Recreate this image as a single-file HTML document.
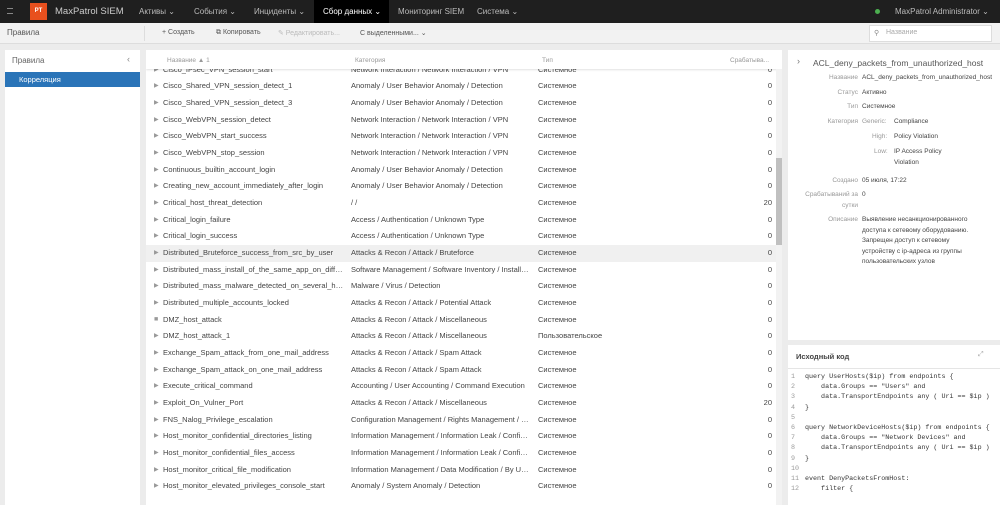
<!DOCTYPE html>
<html><head><meta charset="utf-8"><style>
*{margin:0;padding:0;box-sizing:border-box}
body{width:1000px;height:505px;overflow:hidden;background:#ececec;font-family:"Liberation Sans",sans-serif;font-size:7.5px;color:#333;position:relative}
.abs{position:absolute}
.nav{left:0;top:0;width:1000px;height:23px;background:#1f1f1f;color:#bbb;font-size:8px}
.nav span{position:absolute;top:7px}
.tb{left:0;top:23px;width:1000px;height:21px;background:#f2f2f2;border-bottom:1px solid #ddd;font-size:7px;color:#555}
.tb span{position:absolute;top:6px}
.panel{background:#fff}
.row{position:absolute;left:0;width:630px;height:16.67px;line-height:16.67px;white-space:nowrap;color:#444}
.row span{position:absolute;overflow:hidden;text-overflow:ellipsis}
.c1{left:17px;width:183px}
.c2{left:205px;width:180px}
.c3{left:392px}
.c4{right:4px}
.tri{position:absolute;left:8px;color:#999;font-size:6px}
.lbl{position:absolute;color:#999;text-align:right;width:70px;left:0}
.val{position:absolute;left:74px;color:#444}
.code{font-family:"Liberation Mono",monospace;font-size:6.7px;color:#333;white-space:pre}
</style></head><body>
<div class="abs nav">
<div class="abs" style="left:7px;top:8px;width:6px;height:6px;border-top:1px solid #888;border-bottom:1px solid #888"></div>
<div class="abs" style="left:30px;top:3px;width:17px;height:17px;background:#e8501e;color:#fff;font-size:6px;font-weight:bold;text-align:center;line-height:17px">PT</div>
<span style="left:55px;top:6px;font-size:9.5px;color:#ccc">MaxPatrol SIEM</span>
<span style="left:139px">Активы ⌄</span>
<span style="left:194px">События ⌄</span>
<span style="left:254px">Инциденты ⌄</span>
<div class="abs" style="left:314px;top:0;width:75px;height:23px;background:#000"></div>
<span style="left:323px;color:#fff">Сбор данных ⌄</span>
<span style="left:398px">Мониторинг SIEM</span>
<span style="left:477px">Система ⌄</span>
<div class="abs" style="left:875px;top:9px;width:5px;height:5px;border-radius:50%;background:#4caf50"></div>
<span style="left:895px">MaxPatrol Administrator ⌄</span>
</div>
<div class="abs tb">
<span style="left:7px;font-size:8px;top:5px">Правила</span>
<div class="abs" style="left:144px;top:3px;width:1px;height:15px;background:#ddd"></div>
<span style="left:162px">+ Создать</span>
<span style="left:216px">⧉ Копировать</span>
<span style="left:278px;color:#bbb">✎ Редактировать...</span>
<span style="left:360px">С выделенными... ⌄</span>
<div class="abs" style="left:869px;top:2px;width:123px;height:17px;background:#fff;border:1px solid #ddd"></div>
<span style="left:874px;color:#888">⚲</span>
<span style="left:886px;color:#aaa">Название</span>
</div>
<div class="abs panel" style="left:5px;top:50px;width:135px;height:455px">
<div class="abs" style="left:7px;top:6px;font-size:8px;color:#666">Правила</div>
<div class="abs" style="left:122px;top:4px;font-size:9px;color:#888">‹</div>
<div class="abs" style="left:0;top:22px;width:135px;height:15px;background:#2a74b8;color:#fff;padding:3px 0 0 14px">Корреляция</div>
</div>
<div class="abs panel" style="left:146px;top:50px;width:636px;height:455px;overflow:hidden">
<div class="abs" style="left:0;top:11.67px;width:630px;height:450px">
<div class="row"><span class="tri">▶</span><span class="c1">Cisco_IPsec_VPN_session_start</span><span class="c2">Network Interaction / Network Interaction / VPN</span><span class="c3">Системное</span><span class="c4">0</span></div>
<div class="row" style="top:16.67px"><span class="tri">▶</span><span class="c1">Cisco_Shared_VPN_session_detect_1</span><span class="c2">Anomaly / User Behavior Anomaly / Detection</span><span class="c3">Системное</span><span class="c4">0</span></div>
<div class="row" style="top:33.33px"><span class="tri">▶</span><span class="c1">Cisco_Shared_VPN_session_detect_3</span><span class="c2">Anomaly / User Behavior Anomaly / Detection</span><span class="c3">Системное</span><span class="c4">0</span></div>
<div class="row" style="top:50px"><span class="tri">▶</span><span class="c1">Cisco_WebVPN_session_detect</span><span class="c2">Network Interaction / Network Interaction / VPN</span><span class="c3">Системное</span><span class="c4">0</span></div>
<div class="row" style="top:66.67px"><span class="tri">▶</span><span class="c1">Cisco_WebVPN_start_success</span><span class="c2">Network Interaction / Network Interaction / VPN</span><span class="c3">Системное</span><span class="c4">0</span></div>
<div class="row" style="top:83.33px"><span class="tri">▶</span><span class="c1">Cisco_WebVPN_stop_session</span><span class="c2">Network Interaction / Network Interaction / VPN</span><span class="c3">Системное</span><span class="c4">0</span></div>
<div class="row" style="top:100px"><span class="tri">▶</span><span class="c1">Continuous_builtin_account_login</span><span class="c2">Anomaly / User Behavior Anomaly / Detection</span><span class="c3">Системное</span><span class="c4">0</span></div>
<div class="row" style="top:116.67px"><span class="tri">▶</span><span class="c1">Creating_new_account_immediately_after_login</span><span class="c2">Anomaly / User Behavior Anomaly / Detection</span><span class="c3">Системное</span><span class="c4">0</span></div>
<div class="row" style="top:133.33px"><span class="tri">▶</span><span class="c1">Critical_host_threat_detection</span><span class="c2">/ /</span><span class="c3">Системное</span><span class="c4">20</span></div>
<div class="row" style="top:150px"><span class="tri">▶</span><span class="c1">Critical_login_failure</span><span class="c2">Access / Authentication / Unknown Type</span><span class="c3">Системное</span><span class="c4">0</span></div>
<div class="row" style="top:166.67px"><span class="tri">▶</span><span class="c1">Critical_login_success</span><span class="c2">Access / Authentication / Unknown Type</span><span class="c3">Системное</span><span class="c4">0</span></div>
<div class="row" style="top:183.33px;background:#f0f0f0"><span class="tri">▶</span><span class="c1">Distributed_Bruteforce_success_from_src_by_user</span><span class="c2">Attacks &amp; Recon / Attack / Bruteforce</span><span class="c3">Системное</span><span class="c4">0</span></div>
<div class="row" style="top:200px"><span class="tri">▶</span><span class="c1">Distributed_mass_install_of_the_same_app_on_different</span><span class="c2">Software Management / Software Inventory / Installation</span><span class="c3">Системное</span><span class="c4">0</span></div>
<div class="row" style="top:216.67px"><span class="tri">▶</span><span class="c1">Distributed_mass_malware_detected_on_several_hosts</span><span class="c2">Malware / Virus / Detection</span><span class="c3">Системное</span><span class="c4">0</span></div>
<div class="row" style="top:233.33px"><span class="tri">▶</span><span class="c1">Distributed_multiple_accounts_locked</span><span class="c2">Attacks &amp; Recon / Attack / Potential Attack</span><span class="c3">Системное</span><span class="c4">0</span></div>
<div class="row" style="top:250px"><span class="tri" style="font-size:7px">■</span><span class="c1">DMZ_host_attack</span><span class="c2">Attacks &amp; Recon / Attack / Miscellaneous</span><span class="c3">Системное</span><span class="c4">0</span></div>
<div class="row" style="top:266.67px"><span class="tri">▶</span><span class="c1">DMZ_host_attack_1</span><span class="c2">Attacks &amp; Recon / Attack / Miscellaneous</span><span class="c3">Пользовательское</span><span class="c4">0</span></div>
<div class="row" style="top:283.33px"><span class="tri">▶</span><span class="c1">Exchange_Spam_attack_from_one_mail_address</span><span class="c2">Attacks &amp; Recon / Attack / Spam Attack</span><span class="c3">Системное</span><span class="c4">0</span></div>
<div class="row" style="top:300px"><span class="tri">▶</span><span class="c1">Exchange_Spam_attack_on_one_mail_address</span><span class="c2">Attacks &amp; Recon / Attack / Spam Attack</span><span class="c3">Системное</span><span class="c4">0</span></div>
<div class="row" style="top:316.67px"><span class="tri">▶</span><span class="c1">Execute_critical_command</span><span class="c2">Accounting / User Accounting / Command Execution</span><span class="c3">Системное</span><span class="c4">0</span></div>
<div class="row" style="top:333.33px"><span class="tri">▶</span><span class="c1">Exploit_On_Vulner_Port</span><span class="c2">Attacks &amp; Recon / Attack / Miscellaneous</span><span class="c3">Системное</span><span class="c4">20</span></div>
<div class="row" style="top:350px"><span class="tri">▶</span><span class="c1">FNS_Nalog_Privilege_escalation</span><span class="c2">Configuration Management / Rights Management / Rights</span><span class="c3">Системное</span><span class="c4">0</span></div>
<div class="row" style="top:366.67px"><span class="tri">▶</span><span class="c1">Host_monitor_confidential_directories_listing</span><span class="c2">Information Management / Information Leak / Confidential</span><span class="c3">Системное</span><span class="c4">0</span></div>
<div class="row" style="top:383.33px"><span class="tri">▶</span><span class="c1">Host_monitor_confidential_files_access</span><span class="c2">Information Management / Information Leak / Confidential</span><span class="c3">Системное</span><span class="c4">0</span></div>
<div class="row" style="top:400px"><span class="tri">▶</span><span class="c1">Host_monitor_critical_file_modification</span><span class="c2">Information Management / Data Modification / By User</span><span class="c3">Системное</span><span class="c4">0</span></div>
<div class="row" style="top:416.67px"><span class="tri">▶</span><span class="c1">Host_monitor_elevated_privileges_console_start</span><span class="c2">Anomaly / System Anomaly / Detection</span><span class="c3">Системное</span><span class="c4">0</span></div>
</div>
<div class="abs" style="left:0;top:0;width:636px;height:19px;background:#fff;box-shadow:0 1px 2px rgba(0,0,0,.12);font-size:6.5px;color:#999">
<span class="abs" style="left:21px;top:7px">Название ▲ 1</span>
<span class="abs" style="left:209px;top:7px">Категория</span>
<span class="abs" style="left:396px;top:7px">Тип</span>
<span class="abs" style="left:584px;top:7px">Срабатыва...</span>
</div>
<div class="abs" style="left:630px;top:19px;width:6px;height:436px;background:#f2f2f2"></div>
<div class="abs" style="left:630px;top:108px;width:6px;height:87px;background:#c0c0c0"></div>
</div>
<div class="abs panel" style="left:788px;top:50px;width:212px;height:290px">
<div class="abs" style="left:9px;top:6px;font-size:9px;color:#777">›</div>
<div class="abs" style="left:25px;top:8px;font-size:8.5px;color:#555">ACL_deny_packets_from_unauthorized_host</div>
<div class="abs" style="left:0;top:0;width:212px;font-size:6.5px;line-height:10.5px">
<div class="lbl" style="top:23px">Название</div><div class="val" style="top:23px">ACL_deny_packets_from_unauthorized_host</div>
<div class="lbl" style="top:38px">Статус</div><div class="val" style="top:38px">Активно</div>
<div class="lbl" style="top:52px">Тип</div><div class="val" style="top:52px">Системное</div>
<div class="lbl" style="top:67px">Категория</div><div class="val" style="top:67px;color:#999">Generic:</div><div class="val" style="top:67px;left:106px">Compliance</div>
<div class="val" style="top:82px;left:84px;color:#999">High:</div><div class="val" style="top:82px;left:106px">Policy Violation</div>
<div class="val" style="top:97px;left:86px;color:#999">Low:</div><div class="val" style="top:97px;left:106px;width:60px">IP Access Policy Violation</div>
<div class="lbl" style="top:126px">Создано</div><div class="val" style="top:126px">05 июля, 17:22</div>
<div class="lbl" style="top:140px">Срабатываний за сутки</div><div class="val" style="top:140px">0</div>
<div class="lbl" style="top:165px">Описание</div><div class="val" style="top:165px;width:115px">Выявление несанкционированного доступа к сетевому оборудованию. Запрещен доступ к сетевому устройству с ip-адреса из группы пользовательских узлов</div>
</div>
</div>
<div class="abs panel" style="left:788px;top:345px;width:212px;height:160px">
<div class="abs" style="left:8px;top:7px;font-size:7.5px;font-weight:bold;color:#444">Исходный код</div>
<div class="abs" style="left:190px;top:6px;color:#aaa;font-size:7px">⤢</div>
<div class="abs" style="left:0;top:23px;width:212px;height:1px;background:#e5e5e5"></div>
<div class="abs code" style="left:3px;top:27px;line-height:10.2px;color:#999">1
2
3
4
5
6
7
8
9
10
11
12</div>
<div class="abs code" style="left:17px;top:27px;line-height:10.2px">query UserHosts($ip) from endpoints {
    data.Groups == "Users" and
    data.TransportEndpoints any ( Uri == $ip )
}

query NetworkDeviceHosts($ip) from endpoints {
    data.Groups == "Network Devices" and
    data.TransportEndpoints any ( Uri == $ip )
}

event DenyPacketsFromHost:
    filter {</div>
</div>
</body></html>
